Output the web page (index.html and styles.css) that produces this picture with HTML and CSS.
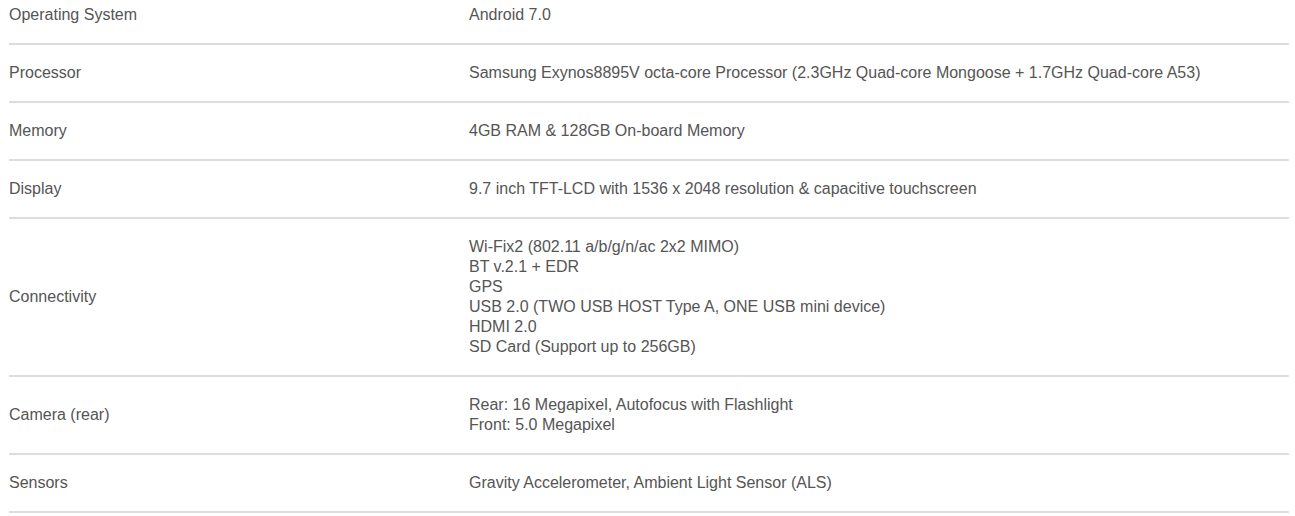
FILE: index.html
```html
<!DOCTYPE html>
<html>
<head>
<meta charset="utf-8">
<link rel="stylesheet" href="styles.css">
</head>
<body>
<div class="specs">
  <div class="row"><div class="label">Operating System</div><div class="value">Android 7.0</div></div>
  <div class="row"><div class="label">Processor</div><div class="value">Samsung Exynos8895V octa-core Processor (2.3GHz Quad-core Mongoose + 1.7GHz Quad-core A53)</div></div>
  <div class="row"><div class="label">Memory</div><div class="value">4GB RAM &amp; 128GB On-board Memory</div></div>
  <div class="row"><div class="label">Display</div><div class="value">9.7 inch TFT-LCD with 1536 x 2048 resolution &amp; capacitive touchscreen</div></div>
  <div class="row"><div class="label">Connectivity</div><div class="value">Wi-Fix2 (802.11 a/b/g/n/ac 2x2 MIMO)<br>BT v.2.1 + EDR<br>GPS<br>USB 2.0 (TWO USB HOST Type A, ONE USB mini device)<br>HDMI 2.0<br>SD Card (Support up to 256GB)</div></div>
  <div class="row"><div class="label">Camera (rear)</div><div class="value">Rear: 16 Megapixel, Autofocus with Flashlight<br>Front: 5.0 Megapixel</div></div>
  <div class="row"><div class="label">Sensors</div><div class="value">Gravity Accelerometer, Ambient Light Sensor (ALS)</div></div>
</div>
</body>
</html>
```
FILE: styles.css
```css
html, body {
  margin: 0;
  padding: 0;
  background: #fff;
}
.specs {
  margin: -13px 0 0 9px;
  width: 1280px;
  font-family: "Liberation Sans", Arial, sans-serif;
  font-size: 16px;
  line-height: 20px;
  color: #555;
}
.row {
  display: grid;
  grid-template-columns: 460px 1fr;
  align-items: center;
  padding: 18px 0;
  border-bottom: 2px solid #ddd;
}
```
